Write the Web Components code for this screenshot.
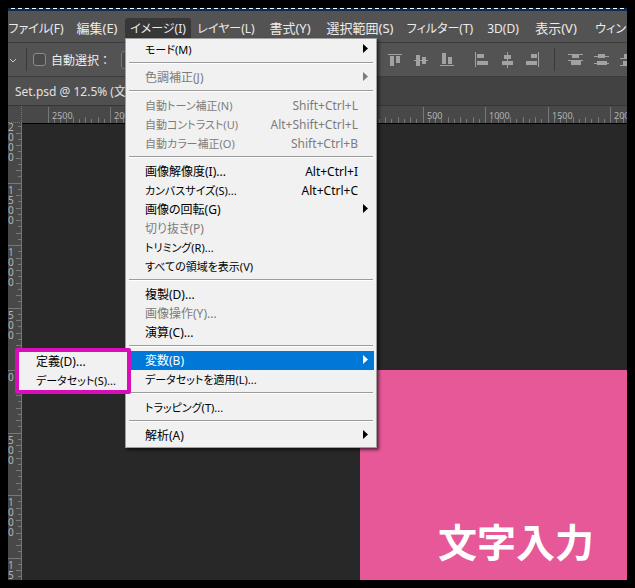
<!DOCTYPE html>
<html lang="ja">
<head>
<meta charset="utf-8">
<title>Set.psd</title>
<style>
html,body{margin:0;height:100%;background:#000}
body{font-family:"Noto Sans","Noto Sans CJK JP",sans-serif;font-feature-settings:"palt";overflow:hidden}
</style>
</head>
<body>
<editor-window></editor-window>

<template id="t-window"><style>
:host{display:flex;flex-direction:column;box-sizing:border-box;height:100vh;padding:8px;color:#e6e6e6}
.frame{flex:1;min-height:0;display:flex;flex-direction:column;overflow:hidden;background:#282828}
.edge{flex:none;height:1px;background:repeating-linear-gradient(90deg,#062a50 0 3px,#fff 3px 7px)}
.edge2{flex:none;height:2px;background:#0c2c50}
nav{display:grid;grid-template-columns:66px 56px 66px 70px 58px 82px 78px 48px 58px 90px;flex:none;height:32px;box-sizing:border-box;margin-left:-5px;padding:7px 0 5px;background:#535353;border-bottom:1px solid #3c3c3c}
.tabs{flex:none;height:29px;background:#424242;box-sizing:border-box;border-bottom:1px solid #363636;display:flex}
.tab{background:#505050;border:0;color:#e0e0e0;font:12px/26px "Noto Sans","Noto Sans CJK JP",sans-serif;padding:2px 60px 0 7px;height:28px;white-space:nowrap}
.work{flex:1;min-height:0;display:grid;grid-template:17px minmax(0,1fr)/14px minmax(0,1fr)}
.corner{background:#4a4a4a;box-sizing:border-box;border-right:1px dotted #777;border-bottom:1px dotted #777}
.canvas{position:relative;background:#282828;overflow:hidden;border-top:1px solid #000}
.art{position:absolute;left:338px;top:246px;right:0;bottom:0;background:#e75899;overflow:hidden}
.art p{position:absolute;left:78px;top:144px;margin:0;white-space:nowrap;color:#fff;font:700 39px/52px "Noto Sans CJK JP",sans-serif;font-feature-settings:normal}
</style>
<div class="frame">
<div class="edge"></div><div class="edge2"></div>
<nav aria-label="メニュー">
<menu-title kana>ファイル(F)</menu-title><menu-title>編集(E)</menu-title>
<menu-title open kana>イメージ(I)
<drop-menu slot="menu">
<menu-row arrow kana>モード(M)</menu-row>
<menu-line></menu-line>
<menu-row arrow off>色調補正(J)</menu-row>
<menu-line></menu-line>
<menu-row off kana key="Shift+Ctrl+L">自動トーン補正(N)</menu-row>
<menu-row off kana key="Alt+Shift+Ctrl+L">自動コントラスト(U)</menu-row>
<menu-row off kana key="Shift+Ctrl+B">自動カラー補正(O)</menu-row>
<menu-line></menu-line>
<menu-row key="Alt+Ctrl+I">画像解像度(I)...</menu-row>
<menu-row kana key="Alt+Ctrl+C">カンバスサイズ(S)...</menu-row>
<menu-row arrow>画像の回転(G)</menu-row>
<menu-row off>切り抜き(P)</menu-row>
<menu-row kana>トリミング(R)...</menu-row>
<menu-row kana>すべての領域を表示(V)</menu-row>
<menu-line></menu-line>
<menu-row>複製(D)...</menu-row>
<menu-row off>画像操作(Y)...</menu-row>
<menu-row>演算(C)...</menu-row>
<menu-line></menu-line>
<menu-row arrow current>変数(B)
<sub-menu slot="sub"><menu-row>定義(D)...</menu-row><menu-row kana>データセット(S)...</menu-row></sub-menu>
</menu-row>
<menu-row kana>データセットを適用(L)...</menu-row>
<menu-line></menu-line>
<menu-row kana>トラッピング(T)...</menu-row>
<menu-line></menu-line>
<menu-row arrow>解析(A)</menu-row>
</drop-menu></menu-title>
<menu-title kana>レイヤー(L)</menu-title><menu-title>書式(Y)</menu-title><menu-title>選択範囲(S)</menu-title><menu-title kana>フィルター(T)</menu-title><menu-title kana>3D(D)</menu-title><menu-title>表示(V)</menu-title><menu-title kana>ウィンドウ(W)</menu-title>
</nav>
<options-bar></options-bar>
<div class="tabs"><button class="tab">Set.psd @ 12.5% (文</button></div>
<div class="work">
<div class="corner"></div>
<canvas-ruler zero="338" quiet-from="120" quiet-to="345"></canvas-ruler>
<canvas-ruler zero="247" vertical></canvas-ruler>
<div class="canvas"><div class="art"><p>文字入力</p></div></div>
</div>
</div></template>

<template id="t-title"><style>
:host{display:block;position:relative;min-width:0}
button{display:block;width:100%;height:20px;border:0;border-radius:3px 3px 0 0;padding:0;background:none;color:#ececec;font:13px/19px "Noto Sans","Noto Sans CJK JP",sans-serif;font-feature-settings:"palt";white-space:nowrap;text-align:center}
:host([kana]) button{font-size:12px}
:host([open]) button{background:#373737}
</style><button><slot></slot></button><slot name="menu"></slot></template>

<template id="t-drop"><style>
:host{display:block;position:absolute;z-index:5;top:100%;left:0;width:252px;box-sizing:border-box;background:#f1f1f1;border:1px solid #a0a0a0;padding:1px 2px 2px;box-shadow:2px 2px 3px rgba(0,0,0,.6)}
</style><slot></slot></template>

<template id="t-sub"><style>
:host{display:block;position:absolute;z-index:6;right:calc(100% - 3px);top:-3px;width:116px;box-sizing:border-box;background:#f1f1f1;border:4px solid #d90db9;border-radius:2px}
</style><slot></slot></template>

<template id="t-row"><style>
:host{display:block;position:relative;color:#000}
:host([off]){color:#7c7c7c}
:host([current]){background:#0078d7;color:#fff}
button{display:flex;justify-content:space-between;width:100%;height:19px;box-sizing:border-box;border:0;background:none;color:inherit;padding:0 16px 0 17px;font:12px/19px "Noto Sans","Noto Sans CJK JP",sans-serif;font-feature-settings:"palt";white-space:nowrap;text-align:left}
:host([kana]) .t{font-size:11px}
svg{display:none;position:absolute;right:6px;top:4px;width:5px;height:9px;fill:currentColor}
:host([arrow]) svg{display:block}
::slotted(sub-menu){color:#000}
</style><button><span class="t"><slot></slot></span><span class="k"></span></button><svg viewBox="0 0 5 9"><path d="M0 0L5 4.500L0 9Z"/></svg><slot name="sub"></slot></template>

<template id="t-line"><style>
:host{display:block;height:9px;box-sizing:border-box;padding:3px 1px 0 1px}
hr{margin:0;border:0;height:1px;background:#9c9c9c;border-bottom:1px solid #fff}
</style><hr></template>

<template id="t-options"><style>
:host{display:flex;align-items:center;flex:none;height:34px;box-sizing:border-box;background:#535353;border-bottom:1px solid #3c3c3c;white-space:nowrap}
button{border:0;padding:0;background:none;width:16px;height:16px;flex:none;margin-right:10px}
button svg{display:block;fill:#a2a2a2}
.chev{width:8px;margin:0 0 0 1px}
.chev svg{fill:none;stroke:#c8c8c8}
i{flex:none;width:1px;height:23px;background:#393939}
.a{margin:0 6px 0 9px}
input{appearance:none;flex:none;margin:0 5px 0 0;width:13px;height:13px;box-sizing:border-box;border:1px solid #8c8c8c;border-radius:3px;background:#4a4a4a}
label{font-size:12px;line-height:18px;padding-top:2px;color:#eee;width:70px;flex:none}
select{appearance:none;flex:none;width:240px;height:18px;border:1px solid #777;border-radius:3px;background:#4a4a4a;margin-right:26px}
.gap{margin-right:18px}.end{margin-right:13px}.b{margin-right:13px}
</style>
<button class="chev" aria-label="ツール"><svg width="8" height="16"><path d="M1 7l3 3 3-3"/></svg></button><i class="a"></i>
<input type="checkbox" id="auto"><label for="auto">自動選択 ：</label><select aria-label="対象"></select>
<button aria-label="上端"><svg width="16" height="16"><path d="M1 2h14v1H1zM3 4h4v10H3zM9 4h4v7H9z"/></svg></button>
<button aria-label="垂直中央"><svg width="16" height="16"><path d="M1 8h14v1H1zM3 3h4v11H3zM9 5h4v7H9z"/></svg></button>
<button class="gap" aria-label="下端"><svg width="16" height="16"><path d="M1 13h14v1H1zM3 1h4v11H3zM9 5h4v7H9z"/></svg></button>
<button aria-label="左端"><svg width="16" height="16"><path d="M2 0h1v15H2zM4 2h7v4H4zM4 9h11v4H4z"/></svg></button>
<button aria-label="水平中央"><svg width="16" height="16"><path d="M8 0h1v16H8zM5 3h7v4H5zM3 9h11v4H3z"/></svg></button>
<button class="end" aria-label="右端"><svg width="16" height="16"><path d="M13 0h1v15h-1zM6 2h6v4H6zM1 9h11v4H1z"/></svg></button>
<i class="b"></i>
<button aria-label="上端分布"><svg width="16" height="16"><path d="M0 2h15v1H0zM4 3h7v3H4zM0 8h15v1H0zM3 9h10v4H3z"/></svg></button>
<button aria-label="中央分布"><svg width="16" height="16"><path d="M0 4h15v1H0zM4 2h7v4H4zM0 11h15v1H0zM3 9h10v4H3z"/></svg></button>
<button aria-label="下端分布"><svg width="16" height="16"><path d="M0 6h15v1H0zM4 2h7v4H4zM0 13h15v1H0zM3 9h10v4H3z"/></svg></button>
</template>

<script>
const shadow = (host, id) => {
  const r = host.attachShadow({mode: "open"});
  r.append(document.getElementById(id).content.cloneNode(true));
  return r;
};
const simple = (name, id) => customElements.define(name, class extends HTMLElement {
  constructor() { super(); shadow(this, id); }
});

// Ruler: a labelled tick every 500 units with nine small ticks between.
// Labels between quiet-from and quiet-to (behind the open menu) are left out.
customElements.define("canvas-ruler", class extends HTMLElement {
  connectedCallback() {
    if (this.shadowRoot) return;
    const r = this.attachShadow({mode: "open"});
    const vert = this.hasAttribute("vertical"), zero = +this.getAttribute("zero");
    const q0 = +this.getAttribute("quiet-from"), q1 = +this.getAttribute("quiet-to");
    let path = "", text = "";
    for (let n = -50; n < 50; n++) {
      const p = Math.round(zero + n * 6.25), major = n % 10 === 0;
      const len = major ? (vert ? 14 : 16) : (n % 2 ? 4 : 6);
      if (p < -8 || p > 640) continue;
      path += vert ? `M${14 - len} ${p}h${len}v1h-${len}z` : `M${p} ${17 - len}h1v${len}h-1z`;
      if (major && !(p > q0 && p < q1 && !vert)) {
        const s = String(Math.abs(n) * 50);
        text += vert ? [...s].map((c, i) => `<text x="0" y="${p + 11 + i * 10}">${c}</text>`).join("")
                     : `<text x="${p + 4}" y="13">${s}</text>`;
      }
    }
    r.innerHTML = `<style>:host{display:block;overflow:hidden;background:#484848;min-width:0;min-height:0}
      svg{display:block;width:100%;height:100%}path{fill:#777}
      text{fill:#b4b4b4;font:${vert ? 10 : 9}px "Noto Sans",sans-serif}</style>
      <svg><path d="${path}"/>${vert ? '<path d="M13 0h1v2000h-1z"/>' : ""}${text}</svg>`;
  }
});
customElements.define("menu-row", class extends HTMLElement {
  connectedCallback() {
    if (this.shadowRoot) return;
    const r = shadow(this, "t-row");
    r.querySelector(".k").textContent = this.getAttribute("key") || "";
    r.querySelector("button").disabled = this.hasAttribute("off");
  }
});
simple("menu-line", "t-line");
simple("drop-menu", "t-drop");
simple("sub-menu", "t-sub");
simple("menu-title", "t-title");
simple("options-bar", "t-options");
simple("editor-window", "t-window");
</script>
</body>
</html>
